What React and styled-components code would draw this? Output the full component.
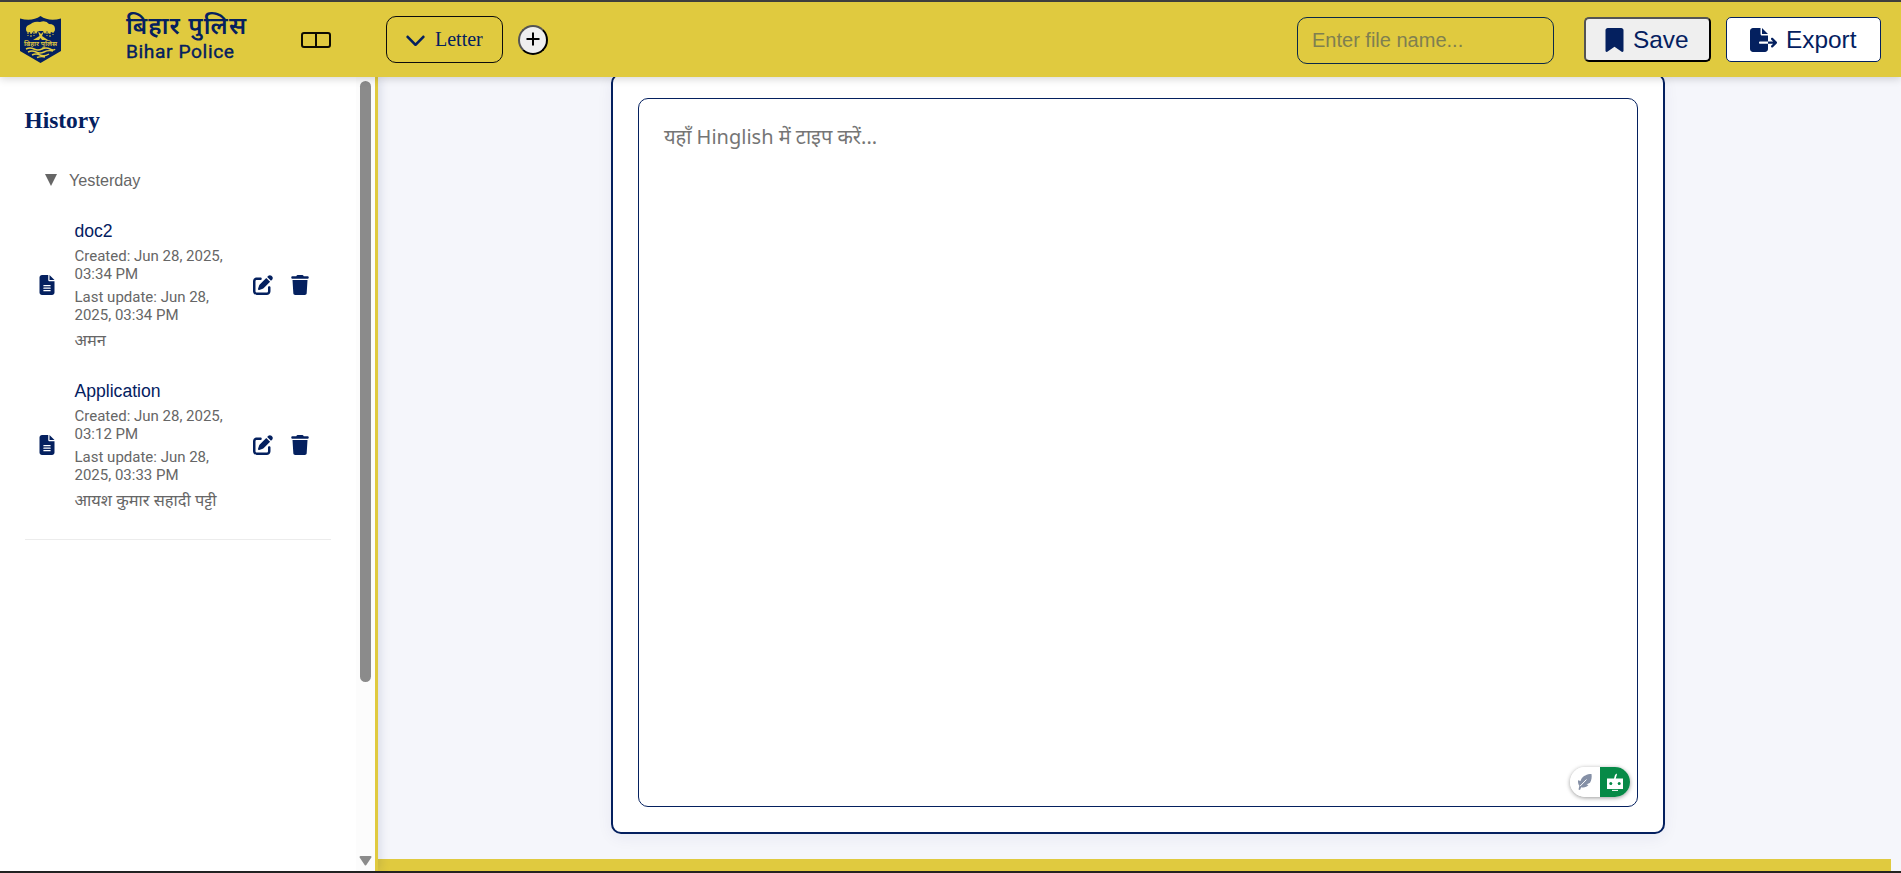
import React from 'react';
import styled, { createGlobalStyle, css } from 'styled-components';
import {
  FaBookmark,
  FaChevronDown,
  FaFileExport,
  FaFileLines,
  FaPenToSquare,
  FaTrash,
} from 'react-icons/fa6';

const navy = '#04205f';
const gold = '#e0ca3f';
const sans = '"Liberation Sans", Arial, sans-serif';
const serif = '"Liberation Serif", "Times New Roman", serif';

const GlobalStyle = createGlobalStyle`
  *, *::before, *::after { box-sizing: border-box; }
  html, body { margin: 0; height: 100%; overflow: hidden; }
  body { font-family: ${sans}; color: ${navy}; }
  button { font: inherit; color: inherit; margin: 0; padding: 0; cursor: pointer; }
`;

const Shell = styled.div`
  display: flex;
  flex-direction: column;
  width: 100%;
  height: 100vh;
  border-top: 2px solid #404040;
  border-bottom: 2px solid #242420;
  background: #f5f6fb;
`;

const Header = styled.header`
  position: relative;
  z-index: 2;
  flex: none;
  display: flex;
  align-items: center;
  height: 75px;
  padding: 0 20px;
  background: ${gold};
  box-shadow: 0 2px 8px rgba(0, 0, 0, 0.16);
`;

const Emblem = styled.svg`
  flex: none;
  width: 41px;
  height: 47px;
`;

const Brand = styled.div`
  width: 175px;
  margin-left: 65px;
  font-family: Roboto, "Noto Sans", sans-serif;
  color: ${navy};
  white-space: nowrap;
`;

const BrandHindi = styled.div`
  height: 27px;
  font-size: 24px;
  font-weight: 600;
  line-height: 25px;
  letter-spacing: 1.2px;
`;

const BrandLatin = styled.div`
  height: 24px;
  font-size: 19.2px;
  font-weight: 400;
  line-height: 22px;
  letter-spacing: 0.6px;
  -webkit-text-stroke: 0.4px ${navy};
`;

const PanelIcon = styled.svg`
  flex: none;
  width: 30px;
  height: 16px;
  margin-top: 1px;
`;

const ModeButton = styled.button`
  display: flex;
  align-items: center;
  gap: 9px;
  width: 117px;
  height: 47px;
  margin-left: 55px;
  padding: 0 0 0 18px;
  border: 1px solid #0c0c0c;
  border-radius: 10px;
  background: transparent;
  font-family: ${serif};
  font-size: 20px;
  svg { width: 21px; height: 21px; }
`;

const AddButton = styled.button`
  display: grid;
  place-items: center;
  width: 30px;
  height: 30px;
  margin-left: 15px;
  border: 2px outset #000;
  border-radius: 50%;
  background: #efefef;
  svg { width: 14px; height: 14px; margin-top: -2px; }
`;

const FileName = styled.input`
  width: 257px;
  height: 47px;
  margin: 2px 30px 0 auto;
  padding: 0 14px;
  border: 1px solid #0b2848;
  border-radius: 10px;
  outline: none;
  background: transparent;
  font: 20px ${sans};
  &::placeholder { color: #7f7f50; opacity: 1; }
`;

const ActionButton = styled.button`
  display: flex;
  align-items: center;
  width: ${(p) => p.$width}px;
  height: 45px;
  margin-right: ${(p) => p.$gap || 0}px;
  padding-left: ${(p) => p.$pad}px;
  border-radius: 5px;
  font-size: 24.4px;
  ${(p) => (p.$raised
    ? css`border: 2px outset #000; background: #efefef;`
    : css`border: 1px solid ${navy}; background: #fff;`)}
  svg { width: ${(p) => p.$icon}px; height: 24px; margin-right: 9px; }
`;

const Body = styled.div`
  flex: 1;
  min-height: 0;
  display: flex;
`;

const Sidebar = styled.aside`
  position: relative;
  z-index: 1;
  flex: none;
  display: flex;
  width: 378px;
  border-right: 3px solid ${gold};
  background: #fff;
  box-shadow: 2px 0 10px rgba(4, 32, 95, 0.13);
`;

const HistoryPane = styled.div`
  flex: 1;
  padding: 29px 25px 0 24.5px;
`;

const Scrollbar = styled.div`
  width: 19px;
  display: flex;
  flex-direction: column;
  align-items: center;
  padding-top: 4px;
  background: #fcfcfc;
`;

const Thumb = styled.div`
  width: 11px;
  height: 601px;
  border-radius: 6px;
  background: #8b8b8b;
`;

const ScrollArrow = styled.svg`
  width: 13px;
  height: 10px;
  margin: auto 0 5px;
`;

const Heading = styled.h3`
  margin: 0;
  height: 28px;
  font: 700 23.4px/28px ${serif};
`;

const Group = styled.section`
  height: 406px;
  border-bottom: 1px solid #ececec;
`;

const GroupTitle = styled.div`
  display: flex;
  align-items: center;
  gap: 12.5px;
  height: 20px;
  padding-left: 20px;
  font-size: 16.2px;
  color: #666;
  svg { width: 12px; height: 12px; margin-top: -1px; }
`;

const HistoryList = styled.div`
  padding-top: 36px;
`;

const Entry = styled.article`
  display: flex;
  align-items: center;
  height: 160px;
  padding-left: 14px;
  color: ${navy};
`;

const Entries = styled.div`
  padding-top: 15px;
`;

const EntryText = styled.div`
  width: 155px;
  margin: 0 23px 0 20px;
`;

const EntryTitle = styled.div`
  height: 26px;
  font-size: 17.6px;
  line-height: 21px;
`;

const Meta = styled.div`
  height: 36px;
  margin-bottom: 5px;
  font: 15px/18px Roboto, sans-serif;
  color: #666;
  white-space: nowrap;
`;

const Snippet = styled.div`
  height: 20px;
  margin-top: 5px;
  font: 16.4px/22px "Noto Sans", sans-serif;
  color: #666;
  white-space: nowrap;
`;

const FileIcon = styled(FaFileLines)`
  flex: none;
  width: 16px;
  height: 20px;
`;

const EditIcon = styled(FaPenToSquare)`
  flex: none;
  width: 20px;
  height: 20px;
`;

const TrashIcon = styled(FaTrash)`
  flex: none;
  width: 18px;
  height: 20px;
  margin-left: 18.5px;
`;

const Workspace = styled.main`
  flex: 1;
  display: flex;
  flex-direction: column;
  align-items: center;
  min-width: 0;
  padding-right: 10px;
`;

const Paper = styled.div`
  flex: none;
  width: 1054px;
  height: 761px;
  margin: -4px 0 25px 7px;
  padding: 23px 25px 25px;
  border: 2px solid ${navy};
  border-radius: 10px;
  background: #fff;
  box-shadow: 0 4px 16px rgba(4, 32, 95, 0.06);
`;

const Editor = styled.div`
  position: relative;
  height: 709px;
  padding: 22px 25px;
  border: 1px solid ${navy};
  border-radius: 10px;
  font: 20px/32px "Noto Sans", sans-serif;
  color: #757575;
`;

const FooterStrip = styled.div`
  align-self: stretch;
  flex: 1;
  background: ${gold};
`;

const Assistant = styled.div`
  position: absolute;
  right: 7px;
  bottom: 9px;
  display: flex;
  width: 60px;
  height: 30px;
  overflow: hidden;
  border-radius: 15px;
  background: #fff;
  box-shadow: 0 1px 4px rgba(0, 0, 0, 0.4);
`;

const AssistantHalf = styled.span`
  flex: 1;
  display: grid;
  place-items: center;
  background: ${(p) => p.$fill};
  svg { display: block; }
`;

const documents = [
  { title: 'doc2', created: '03:34 PM', updated: '03:34 PM', text: 'अमन' },
  { title: 'Application', created: '03:12 PM', updated: '03:33 PM', text: 'आयश कुमार सहादी पट्टी' },
];

function PoliceEmblem() {
  return (
    <Emblem viewBox="0 0 41 47">
      <path d="M0 2.5Q12 6 20.5 0Q29 6 41 2.5V35L20.5 47L0 35Z" fill={navy} />
      <path d="M6 13C6 9 10 9 12 7Q16 5 20 6Q26 4 29 8Q35 8 35 13Q35 17 31 16L29 18L27 15L25 18L23 15L18 15L16 18L14 15L11 18L10 16Q6 17 6 13Z" fill={gold} />
      <path d="M8 16V20M11 16V21M14 16V20M27 16V20M30 16V21M33 15V19" stroke={gold} strokeWidth="1" strokeDasharray="2 1" />
      <path d="M18 15L19.5 20L13 24H19L20.5 22L22 24H28L22 20L24 15L21 18Z" fill={gold} />
      <text x="20.5" y="30" fill={gold} fontFamily="Noto Sans, sans-serif" fontSize="7" fontWeight="600" textAnchor="middle">बिहार पुलिस</text>
      <path d="M6 33Q10 31 14 33T22 33T30 33T35 33M8 36Q12 34 16 36T24 36T33 35M12 39Q16 37 20 39T29 38M17 41.5Q21 40 25 41" fill="none" stroke={gold} strokeWidth="1.4" />
    </Emblem>
  );
}

function Quill() {
  return (
    <svg width="16" height="18" viewBox="0 0 16 18">
      <path d="M14.5 1C10 1 6 3 4.3 6L3.5 8L1 7.3C.8 9.5 1.3 11.5 2.4 12.8L1.5 16.5L3 17L4.2 14.3C7 15 10 14 11.5 12L9.5 11.5L13 9.8C14.6 7 15 4 14.5 1Z" fill="#8590a6" />
      <path d="M3.2 13L9.5 6.5" stroke="#fff" strokeWidth="1" fill="none" />
    </svg>
  );
}

export default function App() {
  return (
    <>
      <GlobalStyle />
      <Shell>
        <Header>
          <PoliceEmblem />
          <Brand>
            <BrandHindi>बिहार पुलिस</BrandHindi>
            <BrandLatin>Bihar Police</BrandLatin>
          </Brand>
          <PanelIcon viewBox="0 0 30 16" fill="none" stroke="#0d0c02" strokeWidth="2">
            <rect x="1" y="1" width="28" height="14" rx="2" />
            <path d="M15 1V15" />
          </PanelIcon>
          <ModeButton><FaChevronDown />Letter</ModeButton>
          <AddButton aria-label="Add">
            <svg viewBox="0 0 14 14" stroke="#000" strokeWidth="2"><path d="M7 0.5V13.5M0.5 7H13.5" /></svg>
          </AddButton>
          <FileName placeholder="Enter file name..." />
          <ActionButton $raised $width={127} $pad={19} $gap={15} $icon={19}><FaBookmark />Save</ActionButton>
          <ActionButton $width={155} $pad={23} $icon={27}><FaFileExport />Export</ActionButton>
        </Header>
        <Body>
          <Sidebar>
            <HistoryPane>
              <Heading>History</Heading>
              <Group>
                <HistoryList>
                  <GroupTitle>
                    <svg viewBox="0 0 12 12"><path d="M0 0H12L6 12Z" fill="#666" /></svg>
                    Yesterday
                  </GroupTitle>
                  <Entries>
                    {documents.map((doc) => (
                      <Entry key={doc.title}>
                        <FileIcon />
                        <EntryText>
                          <EntryTitle>{doc.title}</EntryTitle>
                          <Meta>Created: Jun 28, 2025,<br />{doc.created}</Meta>
                          <Meta>Last update: Jun 28,<br />2025, {doc.updated}</Meta>
                          <Snippet>{doc.text}</Snippet>
                        </EntryText>
                        <EditIcon />
                        <TrashIcon />
                      </Entry>
                    ))}
                  </Entries>
                </HistoryList>
              </Group>
            </HistoryPane>
            <Scrollbar>
              <Thumb />
              <ScrollArrow viewBox="0 0 13 10"><path d="M1.5 1H11.5L6.5 8.5Z" fill="#8b8b8b" stroke="#8b8b8b" strokeWidth="2" strokeLinejoin="round" /></ScrollArrow>
            </Scrollbar>
          </Sidebar>
          <Workspace>
            <Paper>
              <Editor>
                यहाँ Hinglish में टाइप करें...
                <Assistant>
                  <AssistantHalf $fill="#fff"><Quill /></AssistantHalf>
                  <AssistantHalf $fill="#068a47">
                    <svg width="18" height="18" viewBox="0 0 18 18">
                      <path d="M1 5.5H8L9 2L10.5 0.5L11 1.5L9.7 5.5H17V16H1Z" fill="#fff" />
                      <circle cx="4.8" cy="10.5" r="1.5" fill="#068a47" />
                      <circle cx="13.2" cy="10.5" r="1.5" fill="#068a47" />
                      <path d="M6 17.4H12" stroke="#fff" />
                    </svg>
                  </AssistantHalf>
                </Assistant>
              </Editor>
            </Paper>
            <FooterStrip />
          </Workspace>
        </Body>
      </Shell>
    </>
  );
}
